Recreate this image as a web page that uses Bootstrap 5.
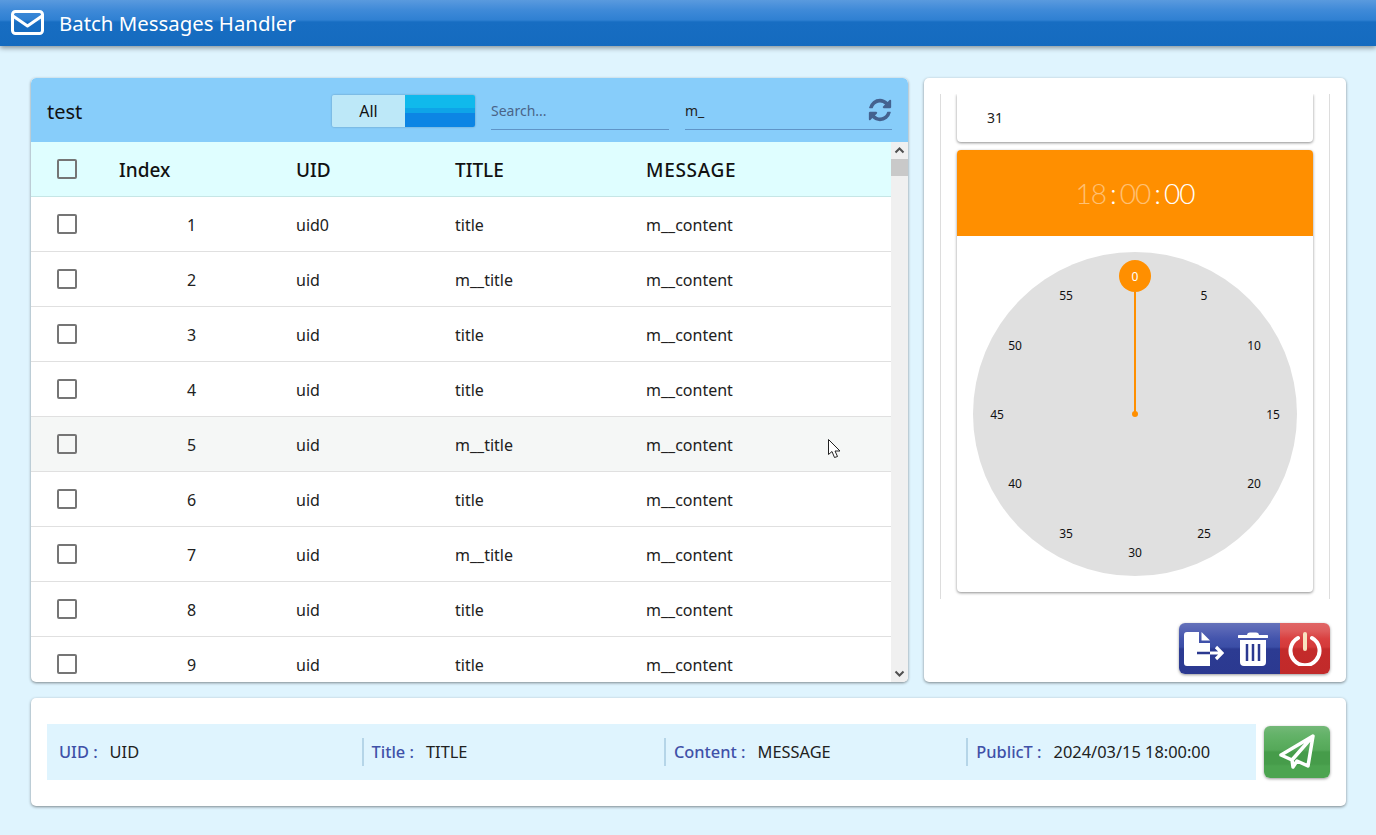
<!DOCTYPE html>
<html lang="en">
<head>
<meta charset="utf-8">
<title>Batch Messages Handler</title>
<link href="https://cdn.jsdelivr.net/npm/bootstrap@5.3.0/dist/css/bootstrap.min.css" rel="stylesheet">
<style>
html,body{height:835px;overflow:hidden}
body{background:#dff4fe;font-family:"Noto Sans",sans-serif;color:#212121;position:relative}
.topbar{height:46px;background:linear-gradient(#5a9ade 0,#3f8ad8 10px,#2f80d2 20px,#176dc2 22px,#156bbf 100%);box-shadow:0 2px 5px rgba(0,0,0,.4);color:#fff;padding-left:11px;gap:15px}
.topbar-title{font-size:20.4px;line-height:48px}
.stage{padding:32px 30px 0 31px;gap:16px}
.panel{background:#fff;border:0;border-radius:5px;box-shadow:0 1px 3px rgba(0,0,0,.45);overflow:hidden}
.panel-left{width:877px;height:604px}
.panel-right{width:422px;height:604px;padding:16px 16px 0;position:relative}
.list-head{background:#87cdfa;height:64px;padding:0 16px;border:0;border-radius:0}
.list-name{font-size:20px;width:285px;color:#111;margin-top:4px}
.toggle-box{width:143px;height:32px;margin-top:2px;border-radius:2px;box-shadow:0 0 2px rgba(0,0,0,.3);overflow:hidden}
.toggle-all{width:73px;flex:none;background:#bde8f8;color:#111;font-size:16px;border:0;border-radius:0;padding:0;line-height:32px}
.btn-group>.btn.toggle-other.toggle-other:not(:first-child){width:70px;flex:none;margin-left:0;border:0;border-radius:0;padding:0;background:linear-gradient(#10b9ec 0,#10b9ec 13px,#0ea4e8 13px,#0ea4e8 18px,#0c85e4 18px,#0c85e4 100%)}
.line-input{background:transparent;border:0;border-bottom:1px solid #5f95c8;border-radius:0;font-size:14px;padding:4px 0 2px;height:40px;box-shadow:none;color:#222}
.line-input::placeholder{color:#4a6488;opacity:1}
.line-input:focus{background:transparent;box-shadow:none}
.in-search{width:178px;margin-left:16px}
.in-filter-wrap{width:207px;margin-left:16px;position:relative}
.in-filter-wrap .line-input{width:100%}
.refresh-ico{position:absolute;right:-1px;top:7px;width:26px;height:26px;fill:#44628f}
.list-body{height:540px}
.grid-wrap{width:860px;overflow:hidden}
.msg-table{table-layout:fixed;width:860px;margin:0;font-size:16px;color:#212121}
.msg-table th,.msg-table td{height:55px;padding:2px 16px 0;vertical-align:middle;border-bottom:1px solid #e0e0e0;background:transparent;box-shadow:none}
.msg-table th{height:54px;font-size:19px;font-weight:500;color:#111;background:#dffeff;border-bottom-color:#c6e6e6}
.msg-table td:nth-child(2){text-align:center}
.msg-table td:first-child,.msg-table th:first-child{padding:0 0 0 26px}
.row-hover td{background:#f5f7f6}
.head-wide{letter-spacing:.7px}
.tick{display:block;width:20px;height:20px;border:2px solid #757575;border-radius:2px}
.fake-scroll{width:17px;background:#f0f0f0}
.scroll-arrow{height:17px;width:17px;display:block;flex:none}
.scroll-thumb{height:17px;background:#c9c9c9;flex:none}
.picker-frame{height:505px;border-left:1px solid #ddd;border-right:1px solid #ddd;overflow:hidden;padding:0 16px;gap:8px}
.date-stub{height:48px;flex:none;background:#fff;border-radius:0 0 4px 4px;box-shadow:0 1px 3px rgba(0,0,0,.45);font-size:14px;padding:14px 0 0 30px;line-height:20px}
.time-card{height:442px;flex:none;background:#fff;border-radius:4px;box-shadow:0 1px 3px rgba(0,0,0,.45);overflow:hidden}
.time-head{height:86px;background:#ff8f00;color:#fff;font-size:28px;font-weight:300;font-family:Lato,"Noto Sans",sans-serif;letter-spacing:-1px}
.time-dim{opacity:.45}
.time-colon{padding:0 3px 0 4px;font-size:28px;letter-spacing:0}
.clock-area{height:356px;padding-top:16px}
.clock-face{width:324px;height:324px;border-radius:50%;background:#e0e0e0;position:relative;margin:0 auto}
.clock-num{position:absolute;width:32px;height:32px;margin:-15px 0 0 -16px;font-size:12px;line-height:32px;text-align:center;color:#111;border-radius:50%}
.clock-num.on{background:#ff8f00;color:#fff;margin-top:-16px;line-height:34px}
.clock-hand{position:absolute;left:161px;top:40px;width:2px;height:122px;background:#ff8f00}
.clock-dot{position:absolute;left:159px;top:159px;width:6px;height:6px;border-radius:50%;background:#ff8f00}
.tool-group{position:absolute;right:16px;top:545px;height:51px;border-radius:6px;overflow:hidden;box-shadow:0 1px 3px rgba(0,0,0,.4)}
.tool-btn{height:51px;flex:none;border:0;border-radius:0;padding:0;display:flex;align-items:center;justify-content:center}
.tool-blue{width:101px;gap:14px;padding-right:8px;background:linear-gradient(#6572ba 0,#5563b4 8px,#4354ac 16px,#3b4ea6 24px,#2c3b92 26px,#2b3990 100%)}
.btn-group>.btn.tool-red.tool-btn:not(:first-child){width:50px;flex:none;margin-left:0;background:linear-gradient(#e06666 0,#de5c5c 8px,#d94040 16px,#d43a3a 24px,#c42b2b 26px,#c12a2a 100%)}
.compose{margin:16px 30px 0 31px;height:108px;padding:26px 16px 0;gap:8px}
.compose-bar{width:1209px;height:56px;background:#dff4fe}
.compose-field{width:302.400px;height:28px;line-height:28px;padding-left:8px;font-size:16.4px;border-left:2px solid #b5d5e8;white-space:nowrap;flex:none}
.compose-field:first-child{border-left:0;width:314.500px;padding-left:12px}
.compose-label{color:#3f51a8;font-weight:500;margin-right:12px}
.send-btn{width:66px;height:52px;margin-top:2px;border:0;padding:0;border-radius:6px;background:linear-gradient(#74b878 0,#65b36a 8px,#5cae60 16px,#55a859 24px,#469c4a 26px,#469c4a 38px,#4ca450 40px,#4ca450 100%);box-shadow:0 1px 3px rgba(0,0,0,.4)}
.mouse-ptr{position:absolute;left:828px;top:439px;width:13px;height:20px}
</style>
</head>
<body>
<header class="topbar d-flex align-items-center">
  <svg width="33" height="26" viewBox="0 0 33 26" fill="none" stroke="#fff" stroke-width="3"><rect x="1.500" y="1.500" width="30" height="22" rx="3"/><path d="M2 6l14.500 10L31 6" stroke-linejoin="round"/></svg>
  <span class="topbar-title">Batch Messages Handler</span>
</header>

<main class="stage d-flex">
  <section class="card panel panel-left">
    <div class="card-header list-head d-flex align-items-center">
      <span class="list-name">test</span>
      <div class="btn-group toggle-box" role="group">
        <button type="button" class="btn toggle-all">All</button>
        <button type="button" class="btn toggle-other" aria-label="Other"></button>
      </div>
      <input class="form-control line-input in-search" placeholder="Search...">
      <div class="in-filter-wrap">
        <input class="form-control line-input" value="m_">
        <svg class="refresh-ico" viewBox="0 0 1792 1792"><path d="M1639 1056q0 5-1 7-64 268-268 434.500t-478 166.500q-146 0-282.500-55t-243.500-157l-129 129q-19 19-45 19t-45-19-19-45v-448q0-26 19-45t45-19h448q26 0 45 19t19 45-19 45l-137 137q71 66 161 102t187 36q134 0 250-65t186-179q11-17 53-117 8-23 30-23h192q13 0 22.500 9.500t9.500 22.500zm25-800v448q0 26-19 45t-45 19h-448q-26 0-45-19t-19-45 19-45l138-138q-148-137-349-137-134 0-250 65t-186 179q-11 17-53 117-8 23-30 23h-199q-13 0-22.500-9.500t-9.500-22.500v-7q65-268 270-434.500t480-166.500q146 0 284 55.500t245 156.500l130-129q19-19 45-19t45 19 19 45z"/></svg>
      </div>
    </div>
    <div class="list-body d-flex">
      <div class="grid-wrap">
        <table class="table msg-table">
          <colgroup><col style="width:72px"><col style="width:177px"><col style="width:159px"><col style="width:191px"><col style="width:261px"></colgroup>
          <thead><tr><th><span class="tick"></span></th><th>Index</th><th>UID</th><th>TITLE</th><th class="head-wide">MESSAGE</th></tr></thead>
          <tbody>
            <tr><td><span class="tick"></span></td><td>1</td><td>uid0</td><td>title</td><td>m__content</td></tr>
            <tr><td><span class="tick"></span></td><td>2</td><td>uid</td><td>m__title</td><td>m__content</td></tr>
            <tr><td><span class="tick"></span></td><td>3</td><td>uid</td><td>title</td><td>m__content</td></tr>
            <tr><td><span class="tick"></span></td><td>4</td><td>uid</td><td>title</td><td>m__content</td></tr>
            <tr class="row-hover"><td><span class="tick"></span></td><td>5</td><td>uid</td><td>m__title</td><td>m__content</td></tr>
            <tr><td><span class="tick"></span></td><td>6</td><td>uid</td><td>title</td><td>m__content</td></tr>
            <tr><td><span class="tick"></span></td><td>7</td><td>uid</td><td>m__title</td><td>m__content</td></tr>
            <tr><td><span class="tick"></span></td><td>8</td><td>uid</td><td>title</td><td>m__content</td></tr>
            <tr><td><span class="tick"></span></td><td>9</td><td>uid</td><td>title</td><td>m__content</td></tr>
          </tbody>
        </table>
      </div>
      <div class="fake-scroll d-flex flex-column">
        <svg class="scroll-arrow" viewBox="0 0 17 17" fill="none" stroke="#505050" stroke-width="2"><path d="M4.500 10.500l4-4 4 4"/></svg>
        <div class="scroll-thumb"></div>
        <div class="flex-grow-1"></div>
        <svg class="scroll-arrow" viewBox="0 0 17 17" fill="none" stroke="#505050" stroke-width="2"><path d="M4.500 6.500l4 4 4-4"/></svg>
      </div>
    </div>
  </section>

  <section class="card panel panel-right">
    <div class="picker-frame d-flex flex-column">
      <div class="date-stub">31</div>
      <div class="time-card">
        <div class="time-head d-flex align-items-center justify-content-center"><span class="time-dim">18</span><span class="time-colon">:</span><span class="time-dim">00</span><span class="time-colon">:</span><span>00</span></div>
        <div class="clock-area">
          <div class="clock-face">
            <div class="clock-hand"></div><div class="clock-dot"></div>
            <div class="clock-num on" style="left:162px;top:24px">0</div>
            <div class="clock-num" style="left:231px;top:43px">5</div>
            <div class="clock-num" style="left:281px;top:93px">10</div>
            <div class="clock-num" style="left:300px;top:162px">15</div>
            <div class="clock-num" style="left:281px;top:231px">20</div>
            <div class="clock-num" style="left:231px;top:281px">25</div>
            <div class="clock-num" style="left:162px;top:300px">30</div>
            <div class="clock-num" style="left:93px;top:281px">35</div>
            <div class="clock-num" style="left:42px;top:231px">40</div>
            <div class="clock-num" style="left:24px;top:162px">45</div>
            <div class="clock-num" style="left:42px;top:93px">50</div>
            <div class="clock-num" style="left:93px;top:43px">55</div>
          </div>
        </div>
      </div>
    </div>
    <div class="btn-group tool-group" role="group">
      <button type="button" class="btn tool-btn tool-blue" aria-label="Export">
        <svg width="40" height="34" viewBox="0 0 40 34"><path d="M3 0h12v11h11v23H3a3 3 0 0 1-3-3V3a3 3 0 0 1 3-3z" fill="#fff"/><path d="M17.500 0l8.500 8.500h-8.500z" fill="#fff"/><path d="M13 21h13" stroke="#2b3990" stroke-width="2.500"/><path d="M26 21h11M32 15l6 6-6 6" fill="none" stroke="#fff" stroke-width="3.200"/></svg>
        <svg width="30" height="34" viewBox="0 0 30 34"><path d="M1 3h28a1.300 1.300 0 0 1 0 3H1a1.300 1.300 0 0 1 0-3z" fill="#fff"/><path d="M9 3.500q0-3 3-3h6q3 0 3 3" fill="#fff"/><path d="M2 8h26v22a4 4 0 0 1-4 4H6a4 4 0 0 1-4-4z" fill="#fff"/><path d="M9 12v17M15 12v17M21 12v17" stroke="#2b3990" stroke-width="2.500"/></svg>
      </button>
      <button type="button" class="btn tool-btn tool-red" aria-label="Power">
        <svg width="34" height="34" viewBox="0 0 34 34" fill="none" stroke="#fff" stroke-width="4" stroke-linecap="round"><path d="M10 6a14.500 14.500 0 1 0 14 0"/><path d="M17 2v15" stroke="#f8e3c0"/></svg>
      </button>
    </div>
  </section>
</main>

<section class="card panel compose d-flex flex-row align-items-start">
  <div class="compose-bar d-flex align-items-center">
    <div class="compose-field"><span class="compose-label">UID :</span>UID</div>
    <div class="compose-field"><span class="compose-label">Title :</span>TITLE</div>
    <div class="compose-field"><span class="compose-label">Content :</span>MESSAGE</div>
    <div class="compose-field"><span class="compose-label">PublicT :</span>2024/03/15 18:00:00</div>
  </div>
  <button type="button" class="btn send-btn d-flex align-items-center justify-content-center" aria-label="Send">
    <svg width="36" height="36" viewBox="0 0 36 36" fill="none" stroke="#fff" stroke-width="3.500" stroke-linejoin="round"><path d="M34 2L2 21l11 5L34 2l-5 30-11-5-4 6-1-7"/></svg>
  </button>
</section>

<svg class="mouse-ptr" viewBox="0 0 13 20"><path d="M.5.500v15l3.500-3 2.500 6 3-1-2.500-5.500h5z" fill="#fff" stroke="#222" stroke-width="1"/></svg>
</body>
</html>
